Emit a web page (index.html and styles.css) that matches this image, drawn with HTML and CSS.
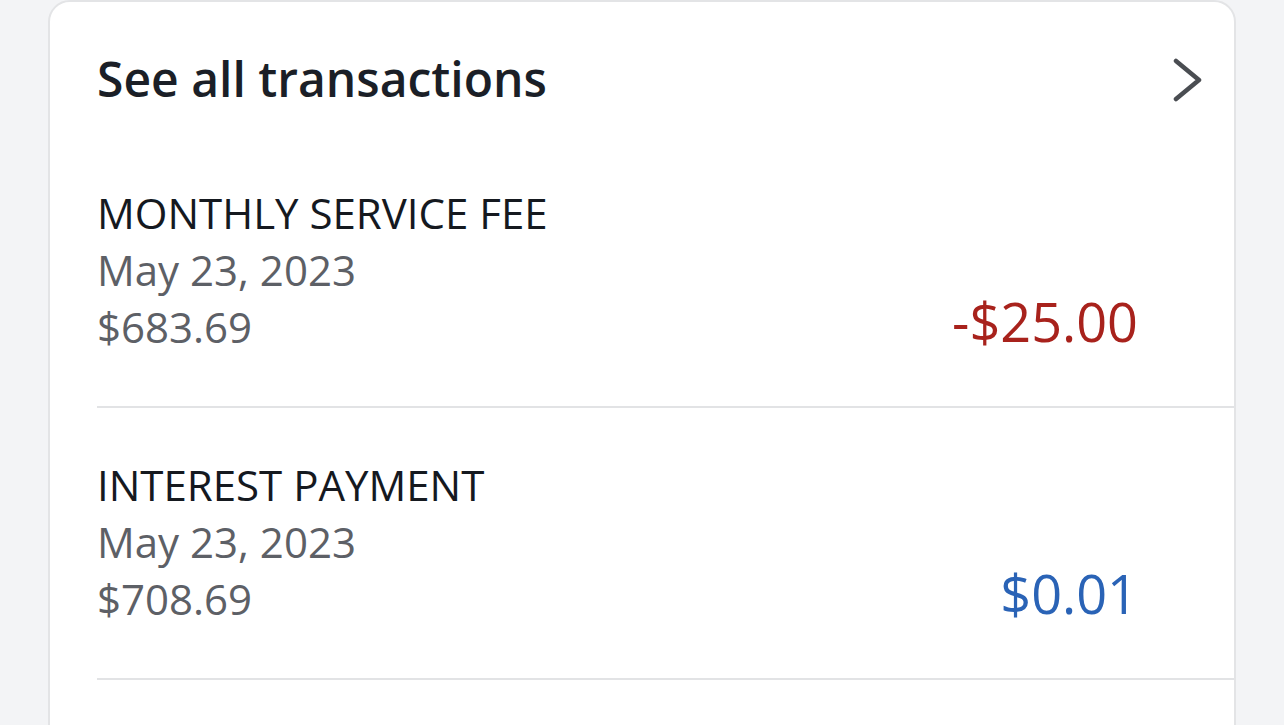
FILE: index.html
```html
<!DOCTYPE html>
<html lang="en">
<head>
<meta charset="utf-8">
<link rel="stylesheet" href="styles.css">
<title>Transactions</title>
</head>
<body>
<div class="card">
  <div class="header">
    <span class="title">See all transactions</span>
    <svg class="chevron" width="32" height="44" viewBox="0 0 32 44" aria-hidden="true">
      <polyline points="4,3 27,22 4,41" fill="none" stroke="#4a4d52" stroke-width="4.5" stroke-linecap="round" stroke-linejoin="round"/>
    </svg>
  </div>
  <div class="row">
    <div class="info">
      <div class="name">MONTHLY SERVICE FEE</div>
      <div class="meta">May 23, 2023</div>
      <div class="meta">$683.69</div>
    </div>
    <div class="amount debit">-$25.00</div>
  </div>
  <div class="row">
    <div class="info">
      <div class="name">INTEREST PAYMENT</div>
      <div class="meta">May 23, 2023</div>
      <div class="meta">$708.69</div>
    </div>
    <div class="amount credit">$0.01</div>
  </div>
</div>
</body>
</html>
```

FILE: styles.css
```css
html, body {
  margin: 0;
  padding: 0;
  background: #f3f4f6;
  font-family: "Open Sans", "Noto Sans", sans-serif;
}

.card {
  margin-left: 48px;
  width: 1188px;
  box-sizing: border-box;
  height: 760px;
  background: #ffffff;
  border: 2px solid #e3e4e6;
  border-radius: 22px;
}

.header {
  display: flex;
  align-items: center;
  justify-content: space-between;
  padding: 43px 30px 0 47px;
}

.title {
  font-size: 48px;
  font-weight: 600;
  line-height: 68px;
  color: #1b1f27;
}

.chevron {
  display: block;
  margin-top: 2px;
}

.row {
  display: flex;
  justify-content: space-between;
  align-items: last baseline;
  margin-left: 47px;
  padding: 48px 96px 51px 0;
  border-bottom: 2px solid #e2e3e5;
}

.header + .row {
  padding-top: 71px;
}

.info {
  font-size: 42px;
  line-height: 57px;
}

.name {
  color: #15191f;
}

.meta {
  color: #5d6066;
}

.amount {
  font-size: 54px;
  line-height: 64px;
  position: relative;
  top: -1px;
}

.debit {
  color: #a8221c;
}

.credit {
  color: #2a63b6;
}
```
